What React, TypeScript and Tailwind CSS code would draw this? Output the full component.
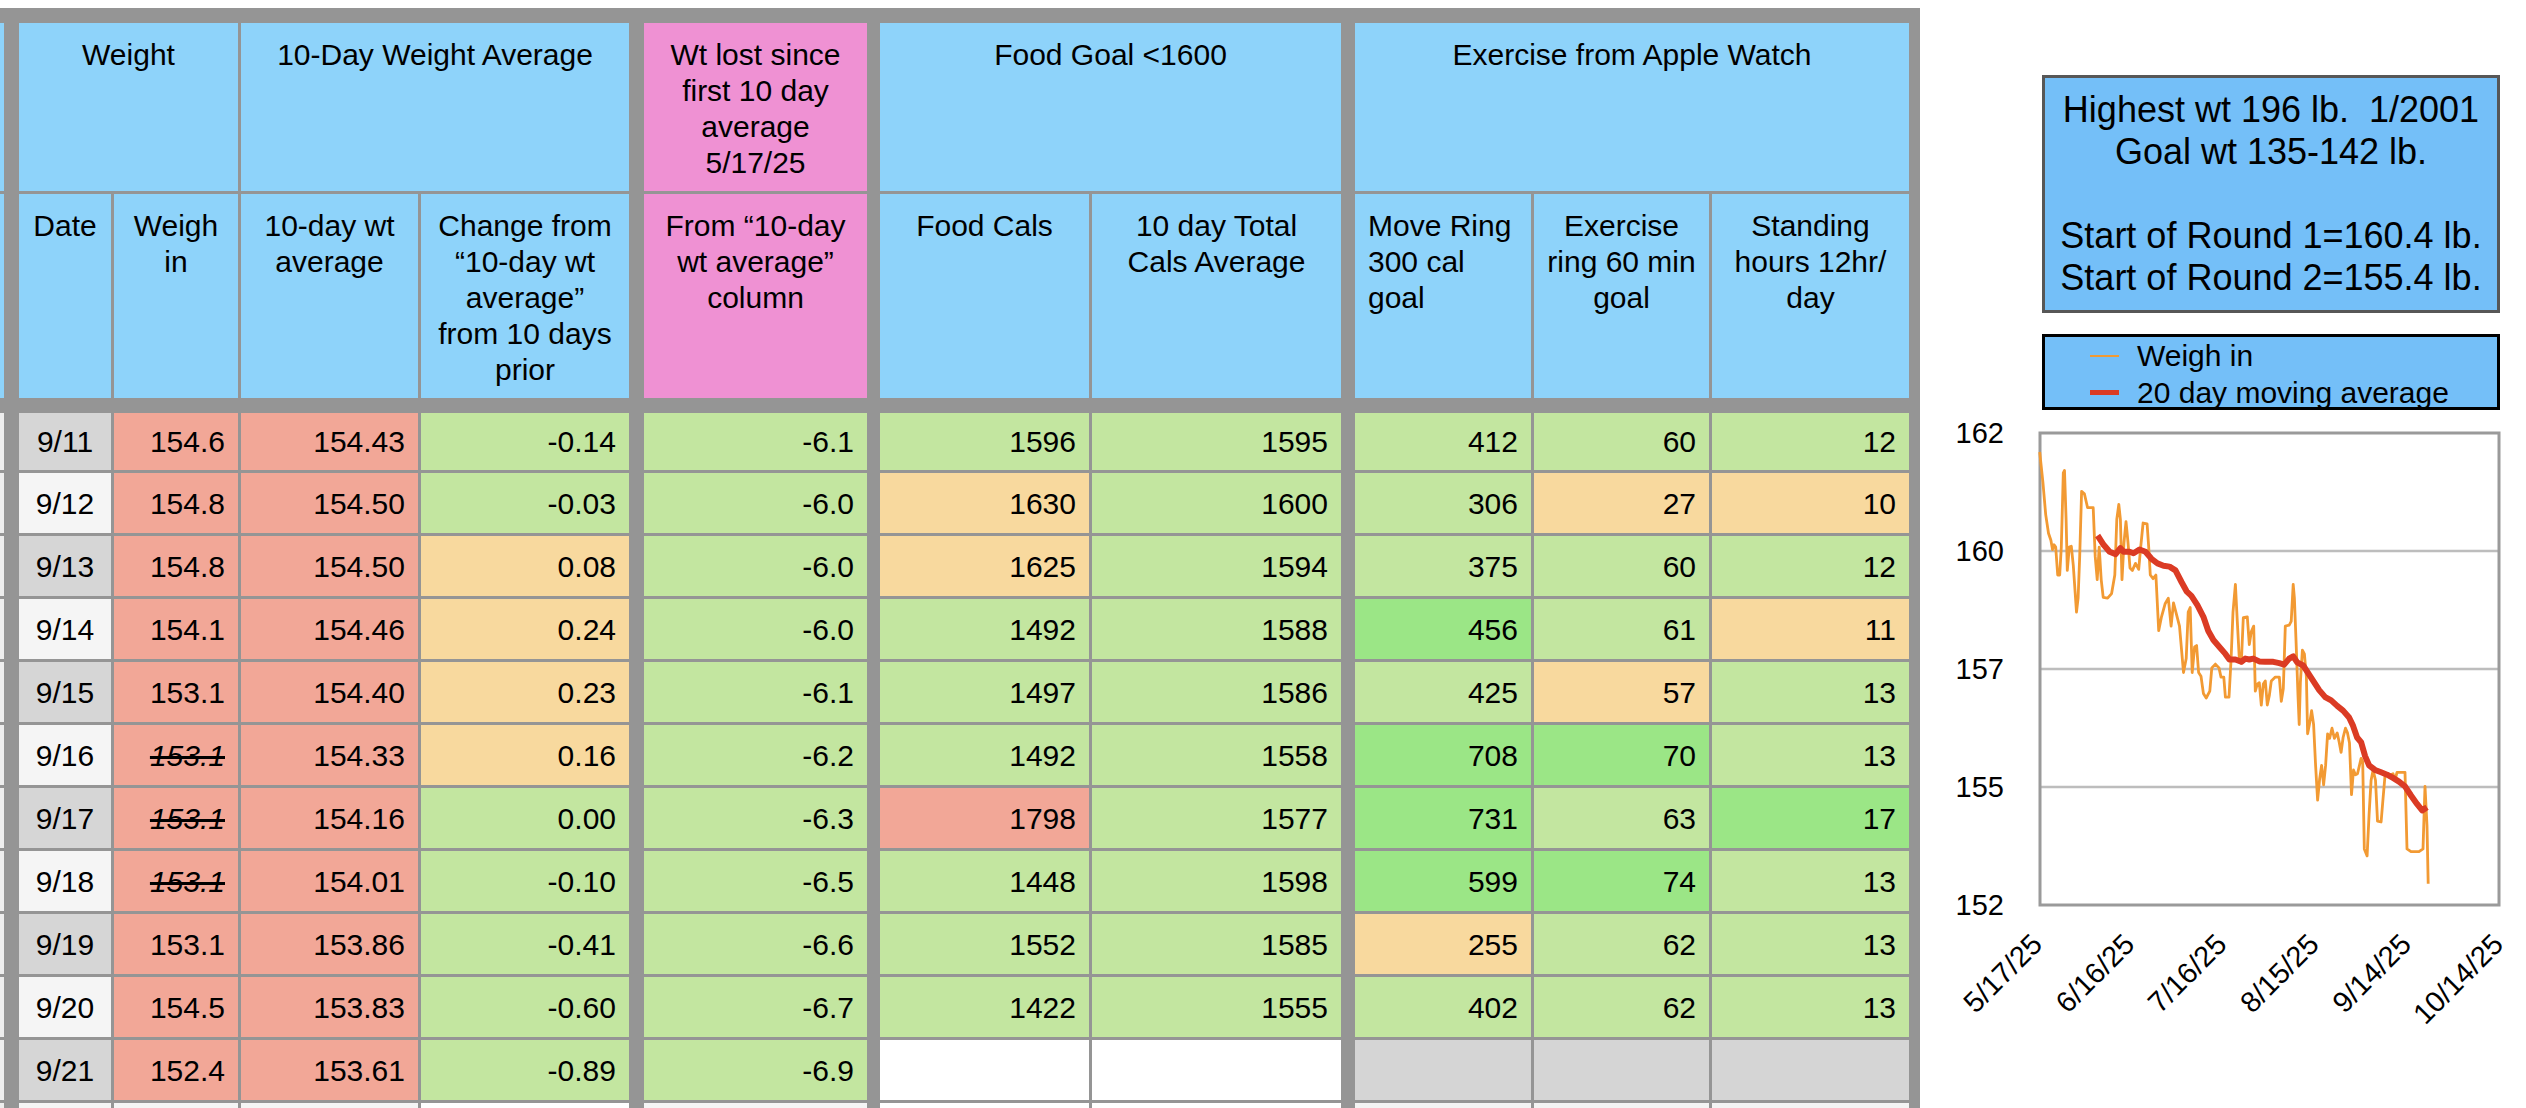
import React from 'react';

const BG: Record<string, string> = {
  S: 'bg-[#f2a797]',
  G: 'bg-[#c3e6a0]',
  B: 'bg-[#9be686]',
  O: 'bg-[#f8d99e]',
  W: 'bg-white',
  E: 'bg-[#d5d5d5]',
  D: 'bg-[#d6d6d6]',
  L: 'bg-[#f5f5f5]',
};

const COLS = [
  'w-[4px]',
  'w-[92px] ml-[15px]',
  'w-[124px] ml-[3px]',
  'w-[177px] ml-[3px]',
  'w-[208px] ml-[3px]',
  'w-[223px] ml-[15px]',
  'w-[209px] ml-[13px]',
  'w-[249px] ml-[3px]',
  'w-[176px] ml-[14px]',
  'w-[175px] ml-[3px]',
  'w-[197px] ml-[3px]',
];

type V = [string, string, boolean?];
type Row = { d: string; bg: string; v: V[] };

const ROWS: Row[] = [
  { d: '9/11', bg: 'D', v: [['154.6', 'S'], ['154.43', 'S'], ['-0.14', 'G'], ['-6.1', 'G'], ['1596', 'G'], ['1595', 'G'], ['412', 'G'], ['60', 'G'], ['12', 'G']] },
  { d: '9/12', bg: 'L', v: [['154.8', 'S'], ['154.50', 'S'], ['-0.03', 'G'], ['-6.0', 'G'], ['1630', 'O'], ['1600', 'G'], ['306', 'G'], ['27', 'O'], ['10', 'O']] },
  { d: '9/13', bg: 'D', v: [['154.8', 'S'], ['154.50', 'S'], ['0.08', 'O'], ['-6.0', 'G'], ['1625', 'O'], ['1594', 'G'], ['375', 'G'], ['60', 'G'], ['12', 'G']] },
  { d: '9/14', bg: 'L', v: [['154.1', 'S'], ['154.46', 'S'], ['0.24', 'O'], ['-6.0', 'G'], ['1492', 'G'], ['1588', 'G'], ['456', 'B'], ['61', 'G'], ['11', 'O']] },
  { d: '9/15', bg: 'D', v: [['153.1', 'S'], ['154.40', 'S'], ['0.23', 'O'], ['-6.1', 'G'], ['1497', 'G'], ['1586', 'G'], ['425', 'G'], ['57', 'O'], ['13', 'G']] },
  { d: '9/16', bg: 'L', v: [['153.1', 'S', true], ['154.33', 'S'], ['0.16', 'O'], ['-6.2', 'G'], ['1492', 'G'], ['1558', 'G'], ['708', 'B'], ['70', 'B'], ['13', 'G']] },
  { d: '9/17', bg: 'D', v: [['153.1', 'S', true], ['154.16', 'S'], ['0.00', 'G'], ['-6.3', 'G'], ['1798', 'S'], ['1577', 'G'], ['731', 'B'], ['63', 'G'], ['17', 'B']] },
  { d: '9/18', bg: 'L', v: [['153.1', 'S', true], ['154.01', 'S'], ['-0.10', 'G'], ['-6.5', 'G'], ['1448', 'G'], ['1598', 'G'], ['599', 'B'], ['74', 'B'], ['13', 'G']] },
  { d: '9/19', bg: 'D', v: [['153.1', 'S'], ['153.86', 'S'], ['-0.41', 'G'], ['-6.6', 'G'], ['1552', 'G'], ['1585', 'G'], ['255', 'O'], ['62', 'G'], ['13', 'G']] },
  { d: '9/20', bg: 'L', v: [['154.5', 'S'], ['153.83', 'S'], ['-0.60', 'G'], ['-6.7', 'G'], ['1422', 'G'], ['1555', 'G'], ['402', 'G'], ['62', 'G'], ['13', 'G']] },
  { d: '9/21', bg: 'D', v: [['152.4', 'S'], ['153.61', 'S'], ['-0.89', 'G'], ['-6.9', 'G'], ['', 'W'], ['', 'W'], ['', 'E'], ['', 'E'], ['', 'E']] },
];

const HB = 'bg-[#8ed3fa]';
const PK = 'bg-[#ef91d3]';

function HCell({ geom, bg, lines, left }: { geom: string; bg: string; lines: string[]; left?: boolean }) {
  return (
    <div
      className={`${geom} shrink-0 ${bg} pt-[14px] text-[30px] leading-[36px] whitespace-nowrap ${left ? 'text-left pl-[13px]' : 'text-center'}`}
    >
      {lines.map((l, i) => (
        <div key={i}>{l}</div>
      ))}
    </div>
  );
}

function DataRow({ row, first }: { row: Row; first: boolean }) {
  return (
    <div className={`flex shrink-0 ${first ? 'mt-[15px] h-[57px]' : 'mt-[3px] h-[60px]'}`}>
      <div className={`${COLS[0]} shrink-0 bg-[#eeeeee]`} />
      <div className={`${COLS[1]} shrink-0 ${BG[row.bg]} flex items-center justify-center text-[30px]`}>{row.d}</div>
      {row.v.map((c, i) => (
        <div
          key={i}
          className={`${COLS[i + 2]} shrink-0 ${BG[c[1]]} flex items-center justify-end pr-[13px] text-[30px]`}
        >
          <span className={c[2] ? 'line-through italic' : ''}>{c[0]}</span>
        </div>
      ))}
    </div>
  );
}

const ORANGE: [number, number][] = [
  [350, 155], [358, 220], [365, 290], [372, 330], [378, 345], [382, 365], [386, 355], [390, 360], [395, 420], [400, 420], [404, 360], [409, 200], [412, 195], [416, 300], [419, 410], [424, 360], [429, 358], [434, 400], [438, 450], [442, 500], [446, 470], [450, 380], [455, 240], [462, 245], [470, 275], [484, 275], [489, 380], [494, 430], [499, 360], [504, 430], [509, 468], [520, 470], [530, 460], [538, 420], [543, 300], [548, 268], [552, 300], [556, 430], [561, 350], [566, 305], [571, 350], [576, 405], [582, 410], [590, 395], [598, 408], [603, 360], [609, 308], [619, 310], [623, 360], [627, 420], [634, 428], [641, 420], [648, 540], [655, 510], [664, 482], [672, 470], [679, 530], [685, 480], [691, 500], [700, 530], [710, 630], [717, 600], [722, 500], [727, 490], [732, 630], [738, 575], [743, 572], [748, 630], [754, 638], [760, 675], [767, 685], [776, 670], [781, 620], [790, 612], [799, 620], [804, 640], [811, 640], [815, 683], [824, 683], [829, 605], [834, 500], [840, 440], [845, 520], [850, 600], [855, 610], [860, 512], [870, 510], [875, 570], [880, 542], [886, 530], [890, 670], [895, 655], [900, 652], [905, 700], [910, 655], [915, 648], [920, 700], [925, 680], [930, 648], [940, 640], [950, 640], [955, 692], [960, 665], [965, 530], [975, 528], [980, 520], [985, 440], [988, 470], [992, 560], [997, 680], [1000, 742], [1003, 650], [1008, 582], [1013, 590], [1018, 640], [1021, 762], [1026, 740], [1031, 712], [1036, 742], [1041, 830], [1046, 905], [1051, 860], [1056, 830], [1061, 872], [1066, 830], [1071, 762], [1076, 772], [1082, 750], [1088, 772], [1095, 760], [1100, 780], [1105, 802], [1110, 770], [1116, 750], [1121, 760], [1126, 782], [1131, 893], [1136, 840], [1141, 850], [1146, 848], [1155, 815], [1159, 822], [1163, 1010], [1170, 1025], [1175, 935], [1180, 862], [1185, 840], [1191, 862], [1196, 950], [1205, 952], [1210, 900], [1215, 850], [1225, 852], [1235, 848], [1240, 862], [1245, 845], [1255, 845], [1265, 845], [1270, 1010], [1280, 1016], [1300, 1016], [1310, 1010], [1315, 875], [1320, 960], [1323, 1085],
];

const RED: [number, number][] = [
  [495, 335], [510, 355], [525, 370], [540, 375], [552, 362], [560, 370], [575, 370], [585, 373], [600, 365], [615, 370], [630, 385], [645, 395], [660, 400], [675, 402], [690, 410], [705, 435], [718, 455], [730, 465], [745, 485], [760, 510], [772, 540], [785, 560], [800, 575], [815, 590], [825, 602], [840, 602], [855, 607], [865, 600], [875, 602], [885, 600], [900, 606], [915, 607], [935, 607], [950, 610], [962, 613], [975, 600], [985, 595], [995, 608], [1010, 615], [1020, 628], [1035, 648], [1050, 668], [1065, 683], [1080, 690], [1095, 702], [1110, 712], [1125, 727], [1135, 745], [1145, 770], [1155, 780], [1165, 810], [1175, 830], [1190, 840], [1205, 845], [1220, 850], [1235, 857], [1250, 865], [1265, 875], [1280, 895], [1295, 913], [1308, 927], [1320, 920],
];

const toPts = (arr: [number, number][]) =>
  arr.map(([x, y]) => `${(1900 + x * 0.39923).toFixed(1)},${(380 + y / 2.1538).toFixed(1)}`).join(' ');

function Chart() {
  const yLabels: [string, number][] = [
    ['162', 433],
    ['160', 551],
    ['157', 669],
    ['155', 787],
    ['152', 905],
  ];
  const xLabels = ['5/17/25', '6/16/25', '7/16/25', '8/15/25', '9/14/25', '10/14/25'];
  return (
    <svg className="block shrink-0" width={606} height={698} viewBox="1920 410 606 698">
      <rect x={2040} y={433} width={459} height={472} fill="#ffffff" />
      {[551, 669, 787].map((y) => (
        <line key={y} x1={2040} x2={2499} y1={y} y2={y} stroke="#bdbdbd" strokeWidth={2.5} />
      ))}
      <rect x={2040} y={433} width={459} height={472} fill="none" stroke="#9a9a9a" strokeWidth={3} />
      {yLabels.map(([t, y]) => (
        <text key={t} x={2004} y={y + 10} textAnchor="end" fontSize={29} fill="#000" fontFamily="'Liberation Sans', Arial, sans-serif">
          {t}
        </text>
      ))}
      {xLabels.map((t, i) => {
        const x = 2040 + i * 92.2 + 4;
        return (
          <text
            key={t}
            transform={`translate(${x} 946) rotate(-45)`}
            textAnchor="end"
            fontSize={29}
            fill="#000"
            fontFamily="'Liberation Sans', Arial, sans-serif"
          >
            {t}
          </text>
        );
      })}
      <polyline points={toPts(ORANGE)} fill="none" stroke="#f29a33" strokeWidth={2.8} strokeLinejoin="round" />
      <polyline points={toPts(RED)} fill="none" stroke="#db3b24" strokeWidth={6} strokeLinejoin="round" strokeLinecap="butt" />
    </svg>
  );
}

export default function App() {
  return (
    <div className="w-[2526px] h-[1108px] overflow-hidden bg-white flex font-['Liberation_Sans',Arial,Helvetica,sans-serif] text-black">
      <div className="w-[1920px] shrink-0 pt-[8px]">
        <div className="h-[1100px] overflow-hidden bg-[#959595] pt-[15px] pr-[11px] flex flex-col">
          <div className="flex shrink-0 h-[168px]">
            <div className={`${COLS[0]} shrink-0 ${HB}`} />
            <HCell geom="w-[219px] ml-[15px]" bg={HB} lines={['Weight']} />
            <HCell geom="w-[388px] ml-[3px]" bg={HB} lines={['10-Day Weight Average']} />
            <HCell geom="w-[223px] ml-[15px]" bg={PK} lines={['Wt lost since', 'first 10 day', 'average', '5/17/25']} />
            <HCell geom="w-[461px] ml-[13px]" bg={HB} lines={['Food Goal <1600']} />
            <HCell geom="w-[554px] ml-[14px]" bg={HB} lines={['Exercise from Apple Watch']} />
          </div>
          <div className="flex shrink-0 h-[204px] mt-[3px]">
            <div className={`${COLS[0]} shrink-0 ${HB}`} />
            <HCell geom={COLS[1]} bg={HB} lines={['Date']} />
            <HCell geom={COLS[2]} bg={HB} lines={['Weigh', 'in']} />
            <HCell geom={COLS[3]} bg={HB} lines={['10-day wt', 'average']} />
            <HCell geom={COLS[4]} bg={HB} lines={['Change from', '\u201c10-day wt', 'average\u201d', 'from 10 days', 'prior']} />
            <HCell geom={COLS[5]} bg={PK} lines={['From \u201c10-day', 'wt average\u201d', 'column']} />
            <HCell geom={COLS[6]} bg={HB} lines={['Food Cals']} />
            <HCell geom={COLS[7]} bg={HB} lines={['10 day Total', 'Cals Average']} />
            <HCell geom={COLS[8]} bg={HB} lines={['Move Ring', '300 cal', 'goal']} left />
            <HCell geom={COLS[9]} bg={HB} lines={['Exercise', 'ring 60 min', 'goal']} />
            <HCell geom={COLS[10]} bg={HB} lines={['Standing', 'hours 12hr/', 'day']} />
          </div>
          {ROWS.map((r, i) => (
            <DataRow key={r.d} row={r} first={i === 0} />
          ))}
          <div className="flex shrink-0 h-[60px] mt-[3px]">
            <div className={`${COLS[0]} shrink-0 bg-[#eeeeee]`} />
            <div className={`${COLS[1]} shrink-0 bg-[#f5f5f5]`} />
            <div className={`${COLS[2]} shrink-0 bg-[#f5f5f5]`} />
            <div className={`${COLS[3]} shrink-0 bg-[#f5f5f5]`} />
            <div className={`${COLS[4]} shrink-0 bg-white`} />
            <div className={`${COLS[5]} shrink-0 bg-[#f5f5f5]`} />
            <div className={`${COLS[6]} shrink-0 bg-white`} />
            <div className={`${COLS[7]} shrink-0 bg-white`} />
            <div className={`${COLS[8]} shrink-0 bg-[#f4f4f4]`} />
            <div className={`${COLS[9]} shrink-0 bg-[#f4f4f4]`} />
            <div className={`${COLS[10]} shrink-0 bg-[#f4f4f4]`} />
          </div>
        </div>
      </div>
      <div className="w-[606px] shrink-0 flex flex-col">
        <div className="ml-[122px] mt-[75px] w-[458px] border-[3px] border-[#575757] bg-[#74bff8] text-center text-[36px] leading-[42px] py-[11px] whitespace-pre">
          <div>{'Highest wt 196 lb.  1/2001'}</div>
          <div>Goal wt 135-142 lb.</div>
          <div>&nbsp;</div>
          <div>Start of Round 1=160.4 lb.</div>
          <div>Start of Round 2=155.4 lb.</div>
        </div>
        <div className="ml-[122px] mt-[21px] w-[458px] h-[76px] border-[3px] border-black bg-[#74bff8] text-[30px] leading-[37px]">
          <div className="flex items-center h-[37px]">
            <div className="ml-[45px] w-[29px] h-[2px] bg-[#f29a33]" />
            <div className="ml-[18px]">Weigh in</div>
          </div>
          <div className="flex items-center h-[37px]">
            <div className="ml-[45px] w-[29px] h-[5px] bg-[#db3b24]" />
            <div className="ml-[18px]">20 day moving average</div>
          </div>
        </div>
        <Chart />
      </div>
    </div>
  );
}
